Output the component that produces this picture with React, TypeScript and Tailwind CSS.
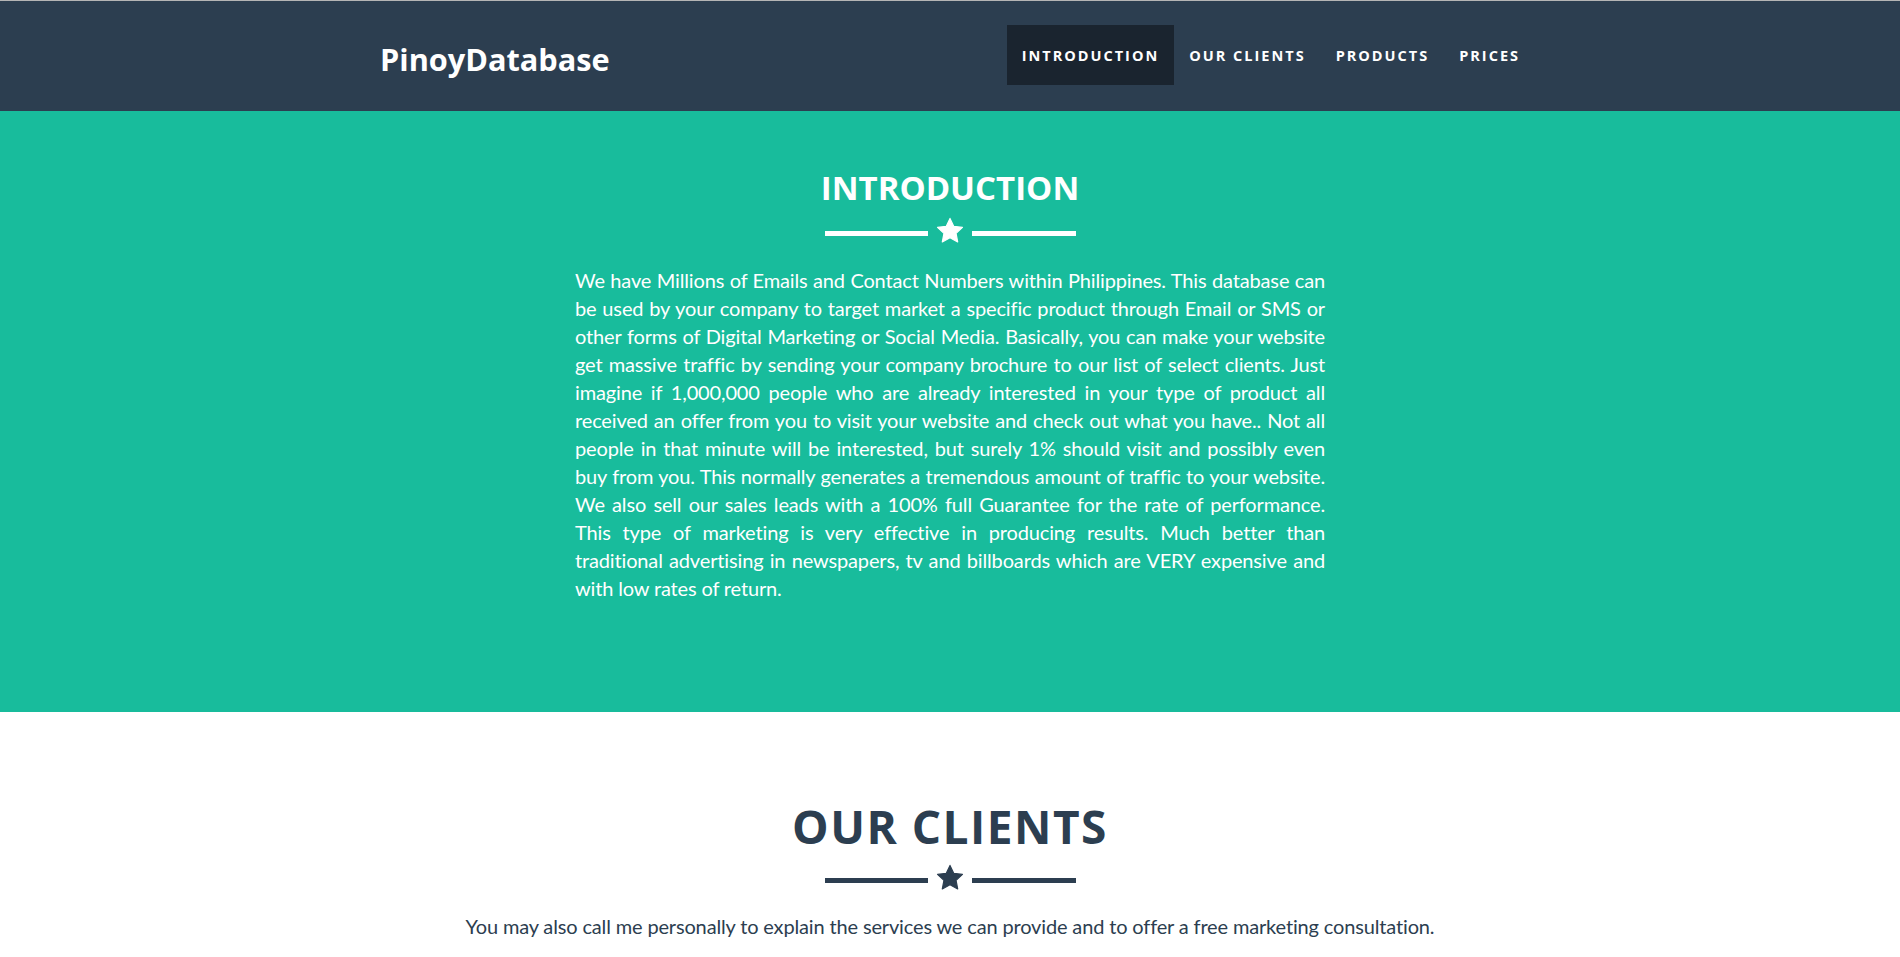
import React from "react";

const heading = "font-['Open_Sans',sans-serif] font-bold";
const body = "font-['Lato',sans-serif] tracking-[-0.15px]";

const navItems = ["Introduction", "Our Clients", "Products", "Prices"];

function Star({ className }: { className: string }) {
	return (
		<svg viewBox="0 0 24 24" className={className} fill="currentColor" stroke="currentColor" strokeWidth="1" strokeLinejoin="round">
			<polygon points="12,1.2 15.2,8 22.7,8.9 17.2,14 18.6,21.4 12,17.8 5.4,21.4 6.8,14 1.3,8.9 8.8,8" />
		</svg>
	);
}

function Divider({ tone }: { tone: "light" | "dark" }) {
	const line = tone === "light" ? "bg-white" : "bg-[#2c3e50]";
	const star = tone === "light" ? "text-white" : "text-[#2c3e50]";
	return (
		<div className="flex items-start justify-center gap-[7px]">
			<div className={`mt-[14px] h-[5px] w-[103px] ${line}`} />
			<Star className={`h-[28px] w-[30px] ${star}`} />
			<div className={`mt-[14px] h-[5px] w-[104px] ${line}`} />
		</div>
	);
}

export default function App() {
	return (
		<div className="min-h-screen bg-white">
			{/* navbar */}
			<nav className="h-[111px] border-t border-[#b5b5b5] bg-[#2c3e50]">
				<div className="mx-auto flex w-[1170px] items-start justify-between px-[15px]">
					<a href="#" className={`${heading} mt-[37px] text-[30.7px] leading-[42px] text-white`}>
						PinoyDatabase
					</a>
					<ul className="-mr-[15px] mt-[24px] flex">
						{navItems.map((item, i) => (
							<li key={item}>
								<a
									href="#"
									className={`${heading} block px-[15px] pb-[19px] pt-[21px] text-[14.5px] uppercase leading-[20px] tracking-[2px] text-white ${
										i === 0 ? "bg-[#1a242f]" : ""
									}`}
								>
									{item}
								</a>
							</li>
						))}
					</ul>
				</div>
			</nav>

			{/* introduction */}
			<section className="bg-[#18bc9c] pb-[110px] pt-[60px] text-white">
				<h2 className={`${heading} text-center text-[33px] uppercase leading-[33px]`}>Introduction</h2>
				<div className="mt-[13px]">
					<Divider tone="light" />
				</div>
				<p className={`${body} mx-auto mt-[21px] w-[750px] text-justify text-[20px] leading-[28px]`}>
					We have Millions of Emails and Contact Numbers within Philippines. This database can be used by your company to
					target market a specific product through Email or SMS or other forms of Digital Marketing or Social Media.
					Basically, you can make your website get massive traffic by sending your company brochure to our list of select
					clients. Just imagine if 1,000,000 people who are already interested in your type of product all received an
					offer from you to visit your website and check out what you have.. Not all people in that minute will be
					interested, but surely 1% should visit and possibly even buy from you. This normally generates a tremendous
					amount of traffic to your website. We also sell our sales leads with a 100% full Guarantee for the rate of
					performance. This type of marketing is very effective in producing results. Much better than traditional
					advertising in newspapers, tv and billboards which are VERY expensive and with low rates of return.
				</p>
			</section>

			{/* our clients */}
			<section className="pb-[100px] pt-[91px] text-[#2c3e50]">
				<h2 className={`${heading} text-center text-[46px] uppercase leading-[46px] tracking-[1.5px]`}>Our Clients</h2>
				<div className="mt-[15px]">
					<Divider tone="dark" />
				</div>
				<p className={`${body} mt-[20px] text-center text-[20px] leading-[28px]`}>
					You may also call me personally to explain the services we can provide and to offer a free marketing consultation.
				</p>
			</section>
		</div>
	);
}
